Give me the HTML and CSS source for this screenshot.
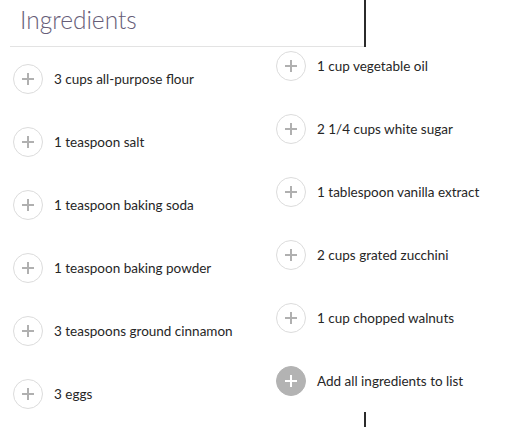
FILE: index.html
```html
<!DOCTYPE html>
<html>
<head>
<meta charset="utf-8">
<link rel="stylesheet" href="styles.css">
</head>
<body>
<div class="page">
  <div class="header">
    <h2 class="title">Ingredients</h2>
    <div class="divider"></div>
  </div>
  <div class="lists">
    <ul class="col col-left">
      <li class="item"><span class="add"></span><span class="label">3 cups all-purpose flour</span></li>
      <li class="item"><span class="add"></span><span class="label">1 teaspoon salt</span></li>
      <li class="item"><span class="add"></span><span class="label">1 teaspoon baking soda</span></li>
      <li class="item"><span class="add"></span><span class="label">1 teaspoon baking powder</span></li>
      <li class="item"><span class="add"></span><span class="label">3 teaspoons ground cinnamon</span></li>
      <li class="item"><span class="add"></span><span class="label">3 eggs</span></li>
    </ul>
    <ul class="col col-right">
      <li class="item"><span class="add"></span><span class="label">1 cup vegetable oil</span></li>
      <li class="item"><span class="add"></span><span class="label">2 1/4 cups white sugar</span></li>
      <li class="item"><span class="add"></span><span class="label">1 tablespoon vanilla extract</span></li>
      <li class="item"><span class="add"></span><span class="label">2 cups grated zucchini</span></li>
      <li class="item"><span class="add"></span><span class="label">1 cup chopped walnuts</span></li>
      <li class="item"><span class="add add-all"></span><span class="label">Add all ingredients to list</span></li>
    </ul>
  </div>
  <div class="foot-bar"></div>
</div>
</body>
</html>
```

FILE: styles.css
```css
html, body {
  margin: 0;
  padding: 0;
  background: #fff;
}
body {
  font-family: Lato, "Liberation Sans", sans-serif;
  color: #262626;
  overflow: hidden;
}
.page {
  width: 511px;
  height: 428px;
}
.header {
  display: flex;
  height: 47px;
}
.title {
  margin: 0 0 0 10px;
  width: 354px;
  padding-left: 10px;
  box-sizing: border-box;
  height: 47px;
  border-bottom: 1px solid #e3e3e3;
  font-weight: 300;
  font-size: 24.5px;
  line-height: 40px;
  color: #665d78;
}
.divider {
  width: 2px;
  height: 47px;
  background: #2b2b2b;
}
.lists {
  display: grid;
  grid-template-columns: 263px 235px;
}
.col {
  list-style: none;
  margin: 0;
  display: flex;
  flex-direction: column;
  gap: 33px;
}
.col-left {
  padding: 17px 0 0 13px;
}
.col-right {
  padding: 4px 0 0 13px;
}
.item {
  display: flex;
  align-items: center;
  gap: 11px;
  height: 30px;
  font-size: 13.5px;
  white-space: nowrap;
}
.add {
  position: relative;
  flex: none;
  width: 30px;
  height: 30px;
  box-sizing: border-box;
  border: 1px solid #dcdcdc;
  border-radius: 50%;
}
.add::before, .add::after {
  content: "";
  position: absolute;
  background: #b0b0b0;
  left: 50%;
  top: 50%;
}
.add::before {
  width: 12px;
  height: 2px;
  margin: -1px 0 0 -6px;
}
.add::after {
  width: 2px;
  height: 12px;
  margin: -6px 0 0 -1px;
}
.add-all {
  background: #b3b3b3;
  border-color: #b3b3b3;
}
.add-all::before, .add-all::after {
  background: #fff;
}
.foot-bar {
  margin: 3px 0 0 364px;
  width: 2px;
  height: 15px;
  background: #2b2b2b;
}
```
